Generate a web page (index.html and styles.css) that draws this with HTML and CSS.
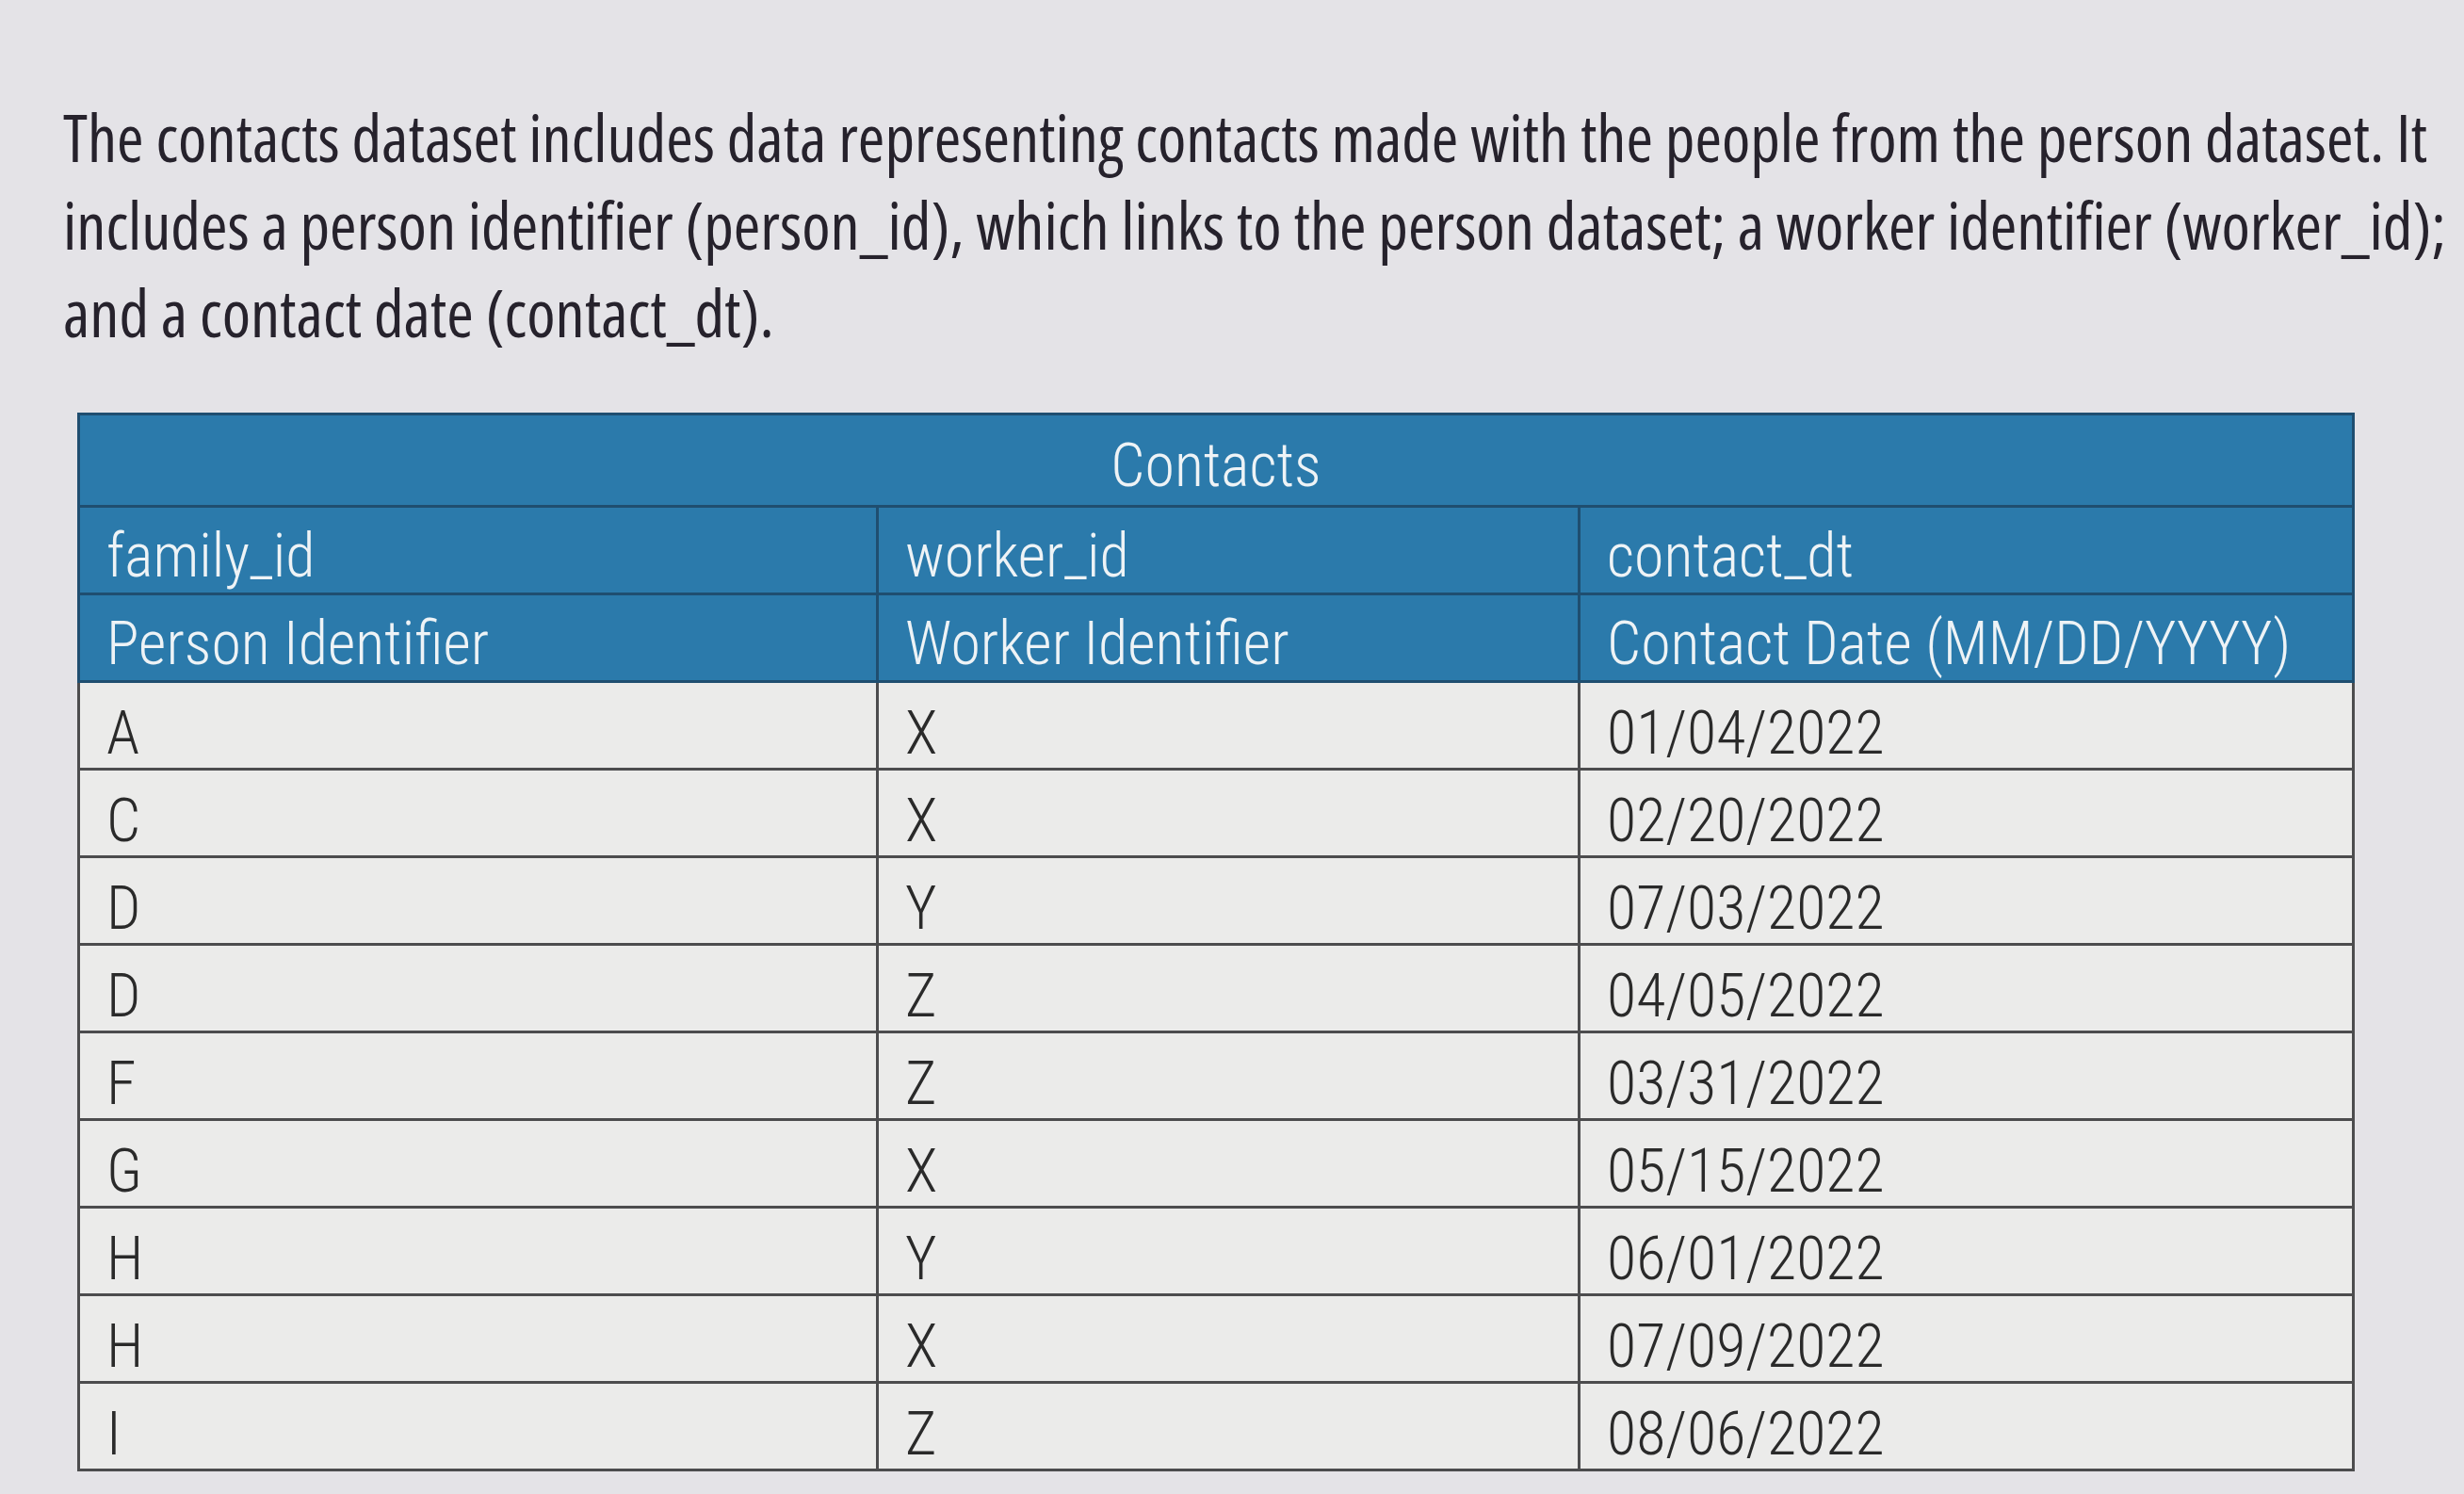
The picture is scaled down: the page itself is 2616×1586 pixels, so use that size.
FILE: index.html
```html
<!DOCTYPE html>
<html lang="en">
<head>
<meta charset="utf-8">
<title>Contacts dataset</title>
<link rel="stylesheet" href="styles.css">
</head>
<body>
<main class="page">
  <p class="intro">The contacts dataset includes data representing contacts made with the people from the person dataset. It<br>includes a person identifier (person_id), which links to the person dataset; a worker identifier (worker_id);<br>and a contact date (contact_dt).</p>
  <table class="contacts">
    <colgroup>
      <col class="c1"><col class="c2"><col class="c3">
    </colgroup>
    <thead>
      <tr class="title-row"><th colspan="3">Contacts</th></tr>
      <tr class="name-row"><th>family_id</th><th>worker_id</th><th>contact_dt</th></tr>
      <tr class="label-row"><th>Person Identifier</th><th>Worker Identifier</th><th>Contact Date (MM/DD/YYYY)</th></tr>
    </thead>
    <tbody>
      <tr><td>A</td><td>X</td><td>01/04/2022</td></tr>
      <tr><td>C</td><td>X</td><td>02/20/2022</td></tr>
      <tr><td>D</td><td>Y</td><td>07/03/2022</td></tr>
      <tr><td>D</td><td>Z</td><td>04/05/2022</td></tr>
      <tr><td>F</td><td>Z</td><td>03/31/2022</td></tr>
      <tr><td>G</td><td>X</td><td>05/15/2022</td></tr>
      <tr><td>H</td><td>Y</td><td>06/01/2022</td></tr>
      <tr><td>H</td><td>X</td><td>07/09/2022</td></tr>
      <tr><td>I</td><td>Z</td><td>08/06/2022</td></tr>
    </tbody>
  </table>
</main>
</body>
</html>
```
FILE: styles.css
```css
html, body {
  margin: 0;
  padding: 0;
  background: #e4e3e7;
  overflow: hidden;
}
body {
  width: 2616px;
  height: 1586px;
}
.page {
  padding: 99px 0 0 67px;
}
.intro {
  margin: 0;
  font-family: "Open Sans", "Lato", sans-serif;
  font-stretch: 75%;
  font-weight: 370;
  font-size: 69px;
  line-height: 93px;
  color: #26222c;
  white-space: nowrap;
}
.contacts {
  margin: 60px 0 0 15px;
  width: 2415px;
  table-layout: fixed;
  border-collapse: collapse;
  font-family: "Roboto", "Lato", sans-serif;
  font-stretch: 75%;
  font-weight: 350;
  font-size: 64px;
  line-height: 66px;
}
.c1 { width: 848px; }
.c2 { width: 745px; }
.c3 { width: 822px; }
.contacts th {
  background: #2b7aab;
  color: #eef3f6;
  font-weight: 350;
  text-align: left;
  padding: 14px 0 0 28px;
  border: 3px solid #1f4e70;
  height: 76px;
  white-space: nowrap;
}
.title-row th {
  text-align: center;
  padding: 12px 0 0 0;
  height: 83px;
}
.contacts td {
  background: #ebebea;
  color: #2a2a2a;
  padding: 18px 0 0 28px;
  border: 3px solid #4c4c4e;
  height: 72px;
  white-space: nowrap;
}
```
